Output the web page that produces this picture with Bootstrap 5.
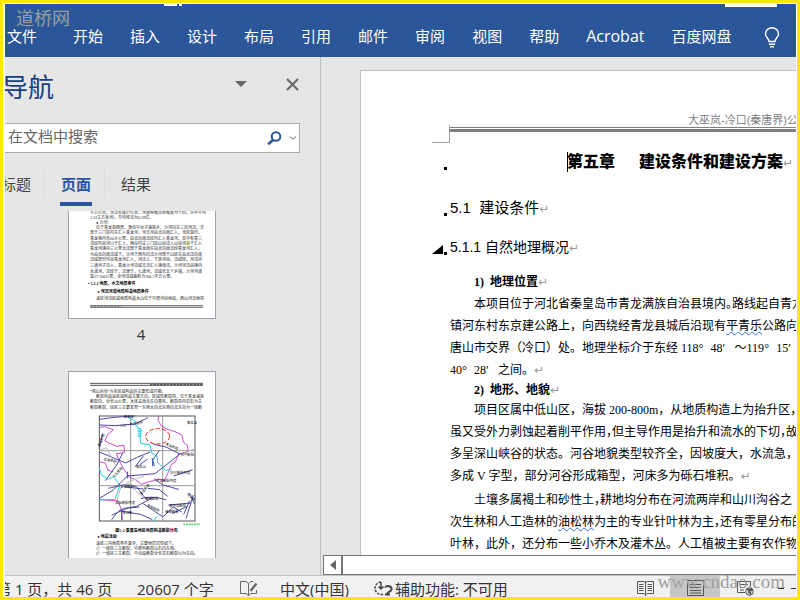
<!DOCTYPE html>
<html lang="zh-CN">
<head>
<meta charset="utf-8">
<meta name="viewport" content="width=device-width, initial-scale=1">
<title>第五章 建设条件和建设方案</title>
<link href="https://cdn.jsdelivr.net/npm/bootstrap@5.3.0/dist/css/bootstrap.min.css" rel="stylesheet">
<style>
:root{--ui:"Open Sans","Noto Sans CJK SC",sans-serif;--blue:#2b579a;--pane:#e6e6e6}
body{font:15px/20px var(--ui);color:#333;background:#fff}
.frame{border:3px solid #fde60a;padding:1px 1px 0 2px}
.ribbon{height:53px;background:var(--blue);padding:0 16px 0 2px}
.ribbon a{color:#fff;text-decoration:none;white-space:nowrap}
.ribbon a:first-child{margin-right:9px}
.ribbon .latin{font-size:16px}
.ribbon svg{margin-left:5px}
.tabs-row{gap:27px;padding-top:22px}
.stub{position:absolute;top:0;height:2px;background:#fff}
.stub-a{left:159px;width:13px}.stub-b{left:174px;width:3px}.stub-c{right:19px;width:52px;height:3px}
.logo-mark{position:absolute;left:11px;top:4px;font:18px/22px "Liberation Serif","Noto Sans CJK SC",serif;color:#98a09f}
.workspace{background:var(--pane)}
.nav-pane{width:316px;border-right:1px solid #c0c0c0;padding-bottom:17px}
.pane-head{height:60px;padding-right:21px;gap:39px}
.pane-head h1{font:26px/36px var(--ui);color:#174080;margin:0 0 0 -3px}
.pane-head button,.find button{border:0;background:none;padding:0;line-height:0}
.pane-head button{margin-bottom:6px}
.find{height:30px;margin:6px 20px 0 -3px;background:#fff;border:1px solid #ababab;padding:0 3px 0 5px}
.find input{border:0;outline:0;background:none;min-width:0;font:15px/20px var(--ui);padding:0 0 4px}
.find input::placeholder{color:#666;opacity:1}
.pane-tabs{height:53px;padding:8px 0 0;margin-left:-5px;gap:12px}
.pane-tabs button{border:0;background:none;color:#444;padding:6px 1px 1px;height:45px;line-height:20px;border-bottom:4px solid transparent;display:block;white-space:nowrap}
.pane-tabs button.on{color:var(--blue);font-weight:700;border-color:var(--blue)}
.pane-tabs i{width:1px;height:26px;background:#dcdcdc;margin-top:9px;margin-right:3px}
.thumbs{margin:5px 0 0 63px;min-height:0}
.sheet{width:148px;background:#fff;border:1px solid #9da4ae;line-height:0}
.sheet.cut{border-top:0}
.thumbs figcaption{width:146px;height:52px;padding-top:5px;text-align:center}
.thumbs text{font-family:"Liberation Serif","Noto Sans CJK SC",serif;font-size:12px;fill:#222}
.thumbs .labels text{font-size:10px;fill:#111}
.thumbs .hd{font-weight:700;fill:#000}
.page{margin:13px 0 0 39px;background:#fff;border:solid #c0c0c0;border-width:1px 0 0 1px;padding-left:88px;color:#000;white-space:nowrap;font:12px/22px "Liberation Serif","Noto Sans CJK SC",serif}
.run-head{height:56px;padding:42px 0 0 239px;font:11px/14px "Liberation Sans","Noto Sans CJK SC",sans-serif;color:#808080}
.rule{height:5px;border-top:1px solid #808080;border-bottom:3px solid #808080}
.corner{position:absolute;left:-17px;top:-3px;width:18px;height:18px;border:solid #a0a0a0;border-width:0 1px 1px 0}
.page h2,.page h3,.page h4,.page h5{margin:0;position:relative;color:#000;font-family:"Liberation Sans","Noto Sans CJK SC",sans-serif}
.page h2{font-size:16px;line-height:24px;font-weight:900;margin-top:18px;padding-left:118px}
.page h3{font-size:15px;line-height:24px;font-weight:400;margin-top:22px;padding-left:1px;white-space:pre}
.page h4{font-size:14px;line-height:24px;font-weight:400;margin-top:15px;padding-left:1px}
.page h5{font:700 12px/18px "Liberation Serif","Noto Sans CJK SC",serif;padding-left:25px}
.page h5.first{margin:14px 0 2px}
.page p{margin:0;padding-left:1px;text-indent:24px}
.page p.next{margin-top:2px}
.page h2::before,.page h3::before,.page h4::before{content:"";position:absolute;left:-5px;bottom:4px;width:3px;height:3px;background:#000}
.fold{position:absolute;left:-17px;bottom:5px;border:solid transparent;border-width:0 0 9px 11px;border-bottom-color:#000}
.caret{position:absolute;left:118px;top:2px;width:1px;height:20px;background:#000}
.tabgap{display:inline-block;width:24px}
.ret{font:400 12px/1 "DejaVu Sans",sans-serif;color:#999}
.unit{display:inline-block;width:12px;text-indent:0}
.hw{font-feature-settings:"halt"}
.spell{text-decoration:underline wavy #2f6fd0 1px;text-underline-offset:1px}
.hbar{height:20px;margin-left:2px;border:1px solid #777;border-right:0;background:#fff}
.hbar button{width:19px;border:0;border-right:2px solid #777;background:#fff;padding:0;line-height:0}
.status{height:22px;background:#f1f1f1;border-top:1px solid #c4c4c4;white-space:nowrap;padding-top:3px}
.status .pages{margin-left:-9px;width:141px}
.status .words{width:103px}.status .proof{width:40px}.status .tongue{width:94px}.status .access{gap:2px}
.status .proof svg,.status .access svg{margin-top:2px}
.views{margin-top:-3px}
.views button{border:0;background:none;height:21px;width:50px;padding:3px 0 0;line-height:0}
.views button.on{background:#c6c6c6}
.zoomline{width:26px;padding-left:8px;gap:7px}
.zoomline i{height:1px;width:9px;background:#333;margin-top:12px}
.site{position:absolute;right:11px;bottom:3px;font:19px/24px "Liberation Serif",serif;color:#a0a0a0;pointer-events:none}
</style>
</head>
<body>
<div class="frame vh-100 overflow-hidden">
<div class="d-flex flex-column h-100 position-relative overflow-hidden">
  <nav class="ribbon flex-shrink-0 position-relative overflow-hidden" aria-label="功能区">
    <span class="stub stub-a"></span><span class="stub stub-b"></span><span class="stub stub-c"></span>
    <span class="logo-mark">道桥网</span>
    <div class="d-flex tabs-row">
      <a href="#">文件</a><a href="#">开始</a><a href="#">插入</a><a href="#">设计</a><a href="#">布局</a><a href="#">引用</a><a href="#">邮件</a><a href="#">审阅</a><a href="#">视图</a><a href="#">帮助</a><a href="#" class="latin">Acrobat</a><a href="#">百度网盘</a>
      <svg class="flex-shrink-0" width="16" height="22" viewBox="0 0 16 22" fill="none" stroke="#fff" stroke-width="1.4" role="img" aria-label="操作说明"><path d="M5 15.500C5 12.500 1.500 11.500 1.500 8A6.500 6.200 0 0 1 14.500 8C14.500 11.500 11 12.500 11 15.500ZM5 18.300H11M6 20.800H10"/></svg>
    </div>
  </nav>
  <div class="workspace d-flex flex-grow-1 overflow-hidden">
    <aside class="nav-pane d-flex flex-column flex-shrink-0 overflow-hidden">
      <div class="pane-head d-flex align-items-center flex-shrink-0">
        <h1 class="me-auto">导航</h1>
        <button aria-label="任务窗格选项"><svg width="12" height="6"><path d="M0 0H12L6 6Z" fill="#666"/></svg></button>
        <button aria-label="关闭"><svg width="13" height="13" viewBox="0 0 13 13" stroke="#666" stroke-width="2"><path d="M1 1L12 12M12 1L1 12"/></svg></button>
      </div>
      <div class="find d-flex align-items-center flex-shrink-0">
        <input class="flex-grow-1" type="text" placeholder="在文档中搜索" aria-label="在文档中搜索">
        <button aria-label="搜索"><svg width="15" height="15" viewBox="0 0 15 15" fill="none" stroke="#2b579a"><circle cx="9" cy="5.500" r="4.300" stroke-width="2"/><path d="M6 9L1.200 13.300" stroke-width="2.600"/></svg></button>
        <button class="ms-2" aria-label="搜索选项"><svg width="6" height="4" fill="none" stroke="#666"><path d="M0 .5L3 3.300L6 .5"/></svg></button>
      </div>
      <div class="pane-tabs d-flex flex-shrink-0" role="tablist">
        <button role="tab">标题</button><i></i><button role="tab" class="on" aria-selected="true">页面</button><i></i><button role="tab">结果</button>
      </div>
      <div class="thumbs flex-grow-1 overflow-hidden">
        <figure class="m-0">
          <div class="sheet cut">
            <svg width="146" height="107" viewBox="27 18 438 321">
              <text x="90" y="27">平方公里，河流长度67公里，河道纵坡比降坡度为十四，多年平均</text>
              <text x="90" y="42">1.52立方米/秒，平均径流为0.59亿。</text>
              <text x="108" y="57">● 沙河：</text>
              <text x="108" y="73">位于青龙县西部，源自中台子满族乡，沙河向东三岔河流，支</text>
              <text x="90" y="88">部于三门店村东汇入青龙河，河支河由北向南汇入，河床宽约，</text>
              <text x="90" y="104">青龙境内长60余公里，由北向南流经沟汇入青龙河，其中有青三</text>
              <text x="90" y="120">流经沟谷河川于汇入，两岸村庄三门店山谷流入山谷河谷于汇入</text>
              <text x="90" y="136">青龙河境内三公里北流部于青龙南东由北向南流经青龙河汇入，</text>
              <text x="90" y="152">为由北向南流域下，沙河于西沟向流沙河部于山区东由北流向南</text>
              <text x="90" y="169">流域部分沟谷青龙河汇入，河流上、下游河谷，流域较，河流内</text>
              <text x="90" y="186">三道河子流入，青龙沙河流域支流汇入境南流，沙河河流由境内</text>
              <text x="90" y="204">大道河，流经于，流源于，七道河，流域长五个乡镇，沙河河道</text>
              <text x="90" y="219">宽27-100公里，全河流域面积为300.5平方公里。</text>
              <text class="hd" x="84" y="240">▪ 5.1.2 地质、水文地质条件</text>
              <text class="hd" x="112" y="264">● 河流河道地质构造地质条件</text>
              <text x="108" y="286">该区河流区域地质构造大山位于中部河谷地段，西山河流地带</text>
              <path d="M90 302H429M90 307H429" stroke="#444" stroke-width="2.500"/>
              <path d="M92 303H185" stroke="#777" stroke-width="4" stroke-dasharray="7 3"/>
            </svg>
          </div>
          <figcaption>4</figcaption>
        </figure>
        <div class="sheet">
          <svg width="146" height="187" viewBox="27 21 438 561">
            <path d="M90 55H429M90 61H429" stroke="#333" stroke-width="2.500"/><path d="M270 58H429" stroke="#555" stroke-width="4" stroke-dasharray="8 2"/>
            <text x="90" y="84">“燕山运动”为本区域构造的主要形成时期。</text>
            <text x="108" y="100">断裂构造是区域构造主要方向，区域性断裂带，位于青龙满族</text>
            <text x="90" y="115">断裂向，全长50公里，大体呈南北东向展布，断裂带内岩石为主</text>
            <text x="90" y="132">断裂断裂，经区三主要发育一东西大向北东西向北东向为一组断</text>
            <g fill="none" stroke-width="3">
              <rect x="118" y="153" width="287" height="315" stroke="#555"/><path d="M212 153V468M308 153V468M118 257H405M118 362H405" stroke="#999"/>
              <path d="M118 188L134 185L160 194L142 210L135 228L150 236L171 244L192 241L193 263L169 266L178 288L190 310L209 337L226 344L244 358L266 350L282 347L294 342L313 347L325 322L334 298L345 292L356 267L385 260L382 241L371 232L365 210L345 200L325 194L305 184L294 166L296 153M118 403L151 407L174 407L184 435L187 465M118 290L136 294L144 316L159 320" stroke="#c94fc9"/>
              <path d="M200 153L208 160L225 167L229 184L244 195L240 219L242 235L270 239L275 264L291 273L293 292L305 304L316 316L334 314M118 309L124 330L145 343L160 335L180 360L165 403L118 405M280 470L291 454" stroke="#22d3dc"/>
              <path d="M238 189V216" stroke="#22d3dc" stroke-width="10" stroke-dasharray="3 2"/>
              <path d="M118 163C180 155 170 156 225 153M118 180L165 182L225 177L264 158M118 261L197 294L229 278L270 261M128 205L118 250M136 347L170 300L188 264M118 400L160 375L202 333L285 326L360 267L318 246L281 238M225 306L250 273M238 300L263 282M278 304V286L298 256M283 303L276 279M203 320L202 340M145 370L194 359L229 365L257 401M191 365L250 372M264 370L298 374L323 394M282 341L309 360L356 373M341 333L398 314M155 464C182 425 187 432 230 424L276 399M155 450L204 429L238 426M185 466V439L242 448L277 464M243 401C270 393 300 398 319 405M250 416L308 455M310 455L340 426L365 441M325 420L394 414M336 446L382 424M371 448L389 407M378 461L400 390M387 384L404 417" stroke="#4c4aa6"/>
              <path d="M171 406L181 371L207 350L252 333M166 300L140 248L118 256M360 270L405 250M200 350L250 399" stroke="#bbb"/>
              <ellipse cx="293" cy="214" rx="36" ry="23" stroke="#ee1c12" stroke-width="3" stroke-dasharray="13 6"/>
            </g>
            <g class="labels">
              <text x="191" y="160">青龙县</text><text transform="translate(180 187) rotate(-10)">大石一青龙断裂</text><text x="381" y="177">青龙县</text><text transform="translate(120 246) rotate(-70)">青龙断裂</text><text transform="translate(316 240) rotate(23)">青龙断裂</text><text transform="translate(130 286) rotate(10)">凌源断裂</text><text x="228" y="309">青龙山</text><text transform="translate(163 340) rotate(-50)">北东断裂</text><text x="330" y="326">抚宁断裂构造</text><text x="289" y="350">卢龙断裂构造</text><text x="181" y="370">迁安断裂</text><text transform="translate(244 391) rotate(-50)">青龙断裂</text><text x="165" y="417">滦县断裂构造</text><text x="256" y="406">昌黎断裂</text><text transform="translate(260 424) rotate(25)">昌黎断裂</text><text x="328" y="425">秦皇岛断裂</text><text x="316" y="445">昌黎断裂</text><text transform="translate(380 388) rotate(45)">抚宁断</text><text x="187" y="448">滦河断</text><text x="362" y="272">抚宁断裂</text>
            </g>
            <path d="M370 478H420" stroke="#65cf78" stroke-width="5" stroke-dasharray="6 2"/>
            <text class="hd" x="166" y="501">图5-2 秦皇岛地区地质构造断裂分布</text>
            <text class="hd" x="112" y="519">● 地震活动</text>
            <text x="108" y="541">该区三内地质条件复杂，主要地层岩性如下。</text>
            <text x="108" y="556">1）一级区三主断裂，中新构断裂山石向东西。</text>
            <text x="108" y="571">2）一级区三主断裂，中北段断裂全长岩石断裂以为东向。</text>
          </svg>
        </div>
      </div>
    </aside>
    <main class="d-flex flex-column flex-grow-1 overflow-hidden">
      <article class="page flex-grow-1 overflow-hidden">
        <div class="run-head">大巫岚-冷口(秦唐界)公</div>
        <div class="rule position-relative"><span class="corner"></span></div>
        <h2><span class="caret"></span>第五章<span class="tabgap"></span>建设条件和建设方案<span class="ret">↵</span></h2>
        <h3>5.1  建设条件<span class="ret">↵</span></h3>
        <h4><span class="fold"></span>5.1.1 自然地理概况<span class="ret">↵</span></h4>
        <h5 class="first">1)&ensp;地理位置<span class="ret">↵</span></h5>
        <p>本项目位于河北省秦皇岛市青龙满族自治县境内<span class="hw">。</span>路线起自青龙<br>镇河东村东京建公路上，向西绕经青龙县城后沿现有<span class="spell">平青乐</span>公路向西<br>唐山市交界（冷口）处。地理坐标介于东经 118<span class="unit">°</span>48<span class="unit">′</span>～119<span class="unit">°</span>15<span class="unit">′</span><br>40<span class="unit">°</span>28<span class="unit">′</span>之间。<span class="ret">↵</span></p>
        <h5>2)&ensp;地形、地貌<span class="ret">↵</span></h5>
        <p>项目区属中低山区，海拔 200-800m，从地质构造上为抬升区，<br>虽又受外力剥蚀起着削平作用<span class="hw">，</span>但主导作用是抬升和流水的下切<span class="hw">，</span>故<br>多呈深山峡谷的状态。河谷地貌类型较齐全，因坡度大，水流急，但<br>多成 V 字型，部分河谷形成箱型，河床多为砾石堆积。<span class="ret">↵</span></p>
        <p class="next">土壤多属褐土和砂性土<span class="hw">，</span>耕地均分布在河流两岸和山川沟谷之<br>次生林和人工造林的<span class="spell">油松林</span>为主的专业针叶林为主<span class="hw">，</span>还有零星分布的<br>叶林，此外，还分布一些小乔木及灌木丛。人工植被主要有农作物</p>
      </article>
      <div class="hbar d-flex flex-shrink-0"><button aria-label="向左滚动"><svg width="6" height="10"><path d="M6 0V10L0 5Z" fill="#666"/></svg></button></div>
    </main>
  </div>
  <footer class="status d-flex flex-shrink-0 position-relative">
    <span class="pages">第 1 页，共 46 页</span>
    <span class="words">20607 个字</span>
    <span class="proof"><svg class="d-block" width="18" height="15" viewBox="0 0 18 15" fill="none" stroke="#666"><path d="M8.500 2.500L6 .5H.5V12.500H6L8.500 14.500L11 12.500H16.500V9M8.500 2.500V14.500M8.500 2.500L11 .5H13"/><path d="M10.500 10L16.500 2.500" stroke-width="2.400"/></svg></span>
    <span class="tongue">中文(中国)</span>
    <span class="access d-flex"><svg width="19" height="16" viewBox="0 0 19 16" fill="none" stroke="#444" stroke-width="1.500"><path d="M7 1A6.300 6.300 0 1 0 10 13" stroke-dasharray="2.500 1.200"/><path d="M7 1V8M4.500 5.500L7 8L9.500 5.500"/><path d="M11 6.500C13 4 18 5 17.500 8.500C17 11 13.500 10.500 13 13.500M11 13.500H16" stroke-width="2"/></svg><span>辅助功能: 不可用</span></span>
    <div class="views d-flex ms-auto">
      <button aria-label="阅读视图"><svg width="17" height="15" viewBox="0 0 17 15" fill="none" stroke="#555"><path d="M8.500 2L7 .5H.5V12.500H7L8.500 14L10 12.500H16.500V.5H10ZM8.500 0V15M2 3.500H6.500M2 5.500H6.500M2 7.500H6.500M2 9.500H6.500M10.500 3.500H15M10.500 5.500H15M10.500 7.500H15M10.500 9.500H15"/></svg></button>
      <button class="on" aria-label="页面视图"><svg width="17" height="16" viewBox="0 0 17 16" fill="none" stroke="#555"><path d="M.5 .5H16.500V15.500H.5ZM3 4.500H14M3 7.500H14M3 10.500H14M3 13H14"/></svg></button>
      <button aria-label="Web 版式视图"><svg width="17" height="16" viewBox="0 0 17 16" fill="none" stroke="#555"><path d="M8 12.500H.5V1.500H13.500V6M3 4.500H11M3 7.500H8M3 10H7"/><circle cx="12.500" cy="11.500" r="3.800" fill="#ddd"/><path d="M10 9L13 10L12 12L14 14M14 8L15 11" stroke-width="2"/></svg></button>
      <div class="zoomline d-flex"><i></i><i></i></div>
    </div>
  </footer>
  <div class="site">www.cndao.com</div>
</div>
</div>
<script src="https://cdn.jsdelivr.net/npm/bootstrap@5.3.0/dist/js/bootstrap.bundle.min.js"></script>
</body>
</html>
